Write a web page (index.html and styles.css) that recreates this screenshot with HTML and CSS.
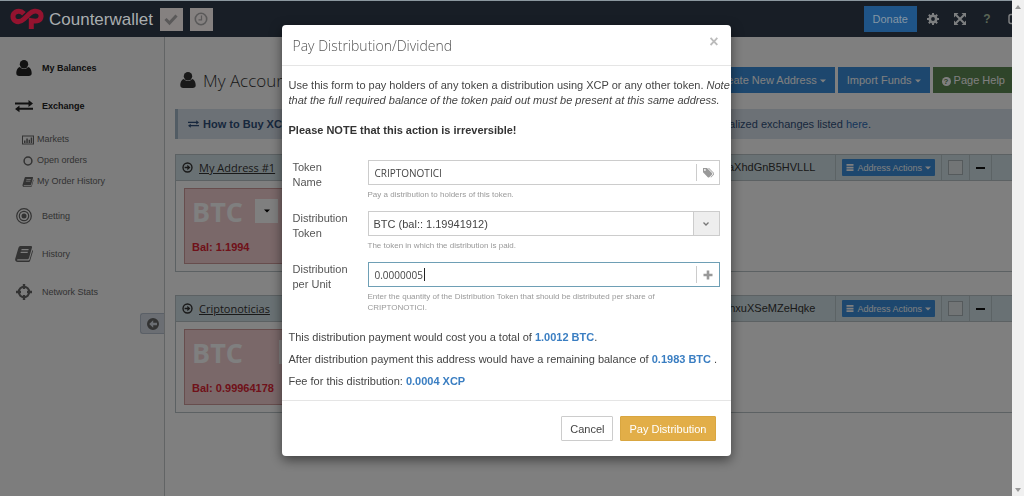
FILE: index.html
```
<!DOCTYPE html>
<html lang="en">
<head>
  <meta charset="UTF-8">
  <meta name="viewport" content="width=device-width, initial-scale=1.0">
  <title>Counterwallet</title>
  <link rel="stylesheet" href="styles.css">
</head>
<body>
  <!-- shared icons -->
  <svg class="sprite" aria-hidden="true">
    <symbol id="i-user" viewBox="0 0 16 16"><circle cx="8" cy="4.200" r="4.200"/><path d="M4 7C1.500 7.500 .3 10.500.3 13.200C.3 15 1.500 16 3.200 16H12.800C14.500 16 15.700 15 15.700 13.200C15.700 10.500 14.500 7.500 12 7C10 9.700 6 9.700 4 7Z"/></symbol>
    <symbol id="i-exchange" viewBox="0 0 20 14"><path d="M0 3H15V.3L20 4.200L15 8V5.200H0ZM20 9H5V6.400L0 10.200L5 14V11.200H20Z"/></symbol>
    <symbol id="i-chart" viewBox="0 0 12 10"><path d="M0 .5H12V9.500H0ZM1 1.500V8.500H11V1.500ZM2 5.500H3.500V8H2ZM4.300 3.500H5.800V8H4.300ZM6.600 4.700H8V8H6.600ZM8.700 2.500H10.200V8H8.700Z" fill-rule="evenodd"/></symbol>
    <symbol id="i-circle" viewBox="0 0 10 10"><circle cx="5" cy="5" r="3.900" fill="none" stroke="currentColor" stroke-width="1.500"/></symbol>
    <symbol id="i-book" viewBox="0 0 18 16"><path d="M5.500 0H15.800C16.800 0 17.200.8 17 1.600L14 12C13.700 13 13 13.300 12.200 13.300H2.800C1.800 13.300 1.800 14.600 3 14.600H13.400C14 14.600 14.400 14.300 14.600 13.600L17.400 4C18 4.400 18 5 17.800 5.700L15.200 14.400C14.900 15.500 14.200 16 13.200 16H2.800C.8 16-.3 14.300.3 12.500L3.400 2C3.800.7 4.400 0 5.500 0ZM6.600 3L6.300 4.200H13.400L13.700 3ZM5.800 5.800L5.500 7H12.600L12.900 5.800Z" fill-rule="evenodd"/></symbol>
    <symbol id="i-target" viewBox="0 0 16 16"><circle cx="8" cy="8" r="7.300" fill="none" stroke="currentColor" stroke-width="1.200"/><circle cx="8" cy="8" r="4.700" fill="none" stroke="currentColor" stroke-width="1.200"/><circle cx="8" cy="8" r="2.500"/></symbol>
    <symbol id="i-cross" viewBox="0 0 16 16"><circle cx="8" cy="8" r="5.200" fill="none" stroke="currentColor" stroke-width="2"/><path d="M6.800 0H9.200V5H6.800ZM6.800 11H9.200V16H6.800ZM0 6.800H5V9.200H0ZM11 6.800H16V9.200H11Z"/></symbol>
    <symbol id="i-right" viewBox="0 0 12 12"><circle cx="6" cy="6" r="4.900" fill="none" stroke="currentColor" stroke-width="1.500"/><path d="M2.800 5.200H5.800V3L9.200 6L5.800 9V6.800H2.800Z"/></symbol>
    <symbol id="i-bars" viewBox="0 0 8 8"><path d="M0 0H8V2H0ZM0 3H8V5H0ZM0 6H8V8H0Z"/></symbol>
    <symbol id="i-caret" viewBox="0 0 6 4"><path d="M0 .5H6L3 3.500Z"/></symbol>
  </svg>

  <header class="topbar">
    <a class="brand" href="#">
      <svg class="logo" viewBox="0 0 34 22"><path d="M14 5.800C11.500 3.200 8 2.800 5.200 4.300C2.300 6 2.300 10.800 5 12.600C8 14.500 11.500 13.300 14 11L19.500 5.800C22.500 3 26.500 2.300 29.300 4.300C32 6.500 31.500 10.800 28.700 12.400C26.500 13.600 24 13.200 21.300 12.600V21" fill="none" stroke="currentColor" stroke-width="5"/></svg>
      <span>Counterwallet</span>
    </a>
    <button class="square" aria-label="Status"><svg viewBox="0 0 14 14"><path d="M1.500 7L5.500 11L12.500 3.500" fill="none" stroke="currentColor" stroke-width="3"/></svg></button>
    <button class="square" aria-label="Pending"><svg viewBox="0 0 14 14"><circle cx="7" cy="7" r="5.700" fill="none" stroke="currentColor" stroke-width="1.600"/><path d="M7.500 3.500V7.800H4.500" fill="none" stroke="currentColor" stroke-width="1.200"/></svg></button>
    <nav class="tools">
      <button class="donate">Donate</button>
      <a href="#" aria-label="Settings"><svg viewBox="0 0 12 12"><circle cx="6" cy="6" r="3.200" fill="none" stroke="currentColor" stroke-width="2.600"/><path d="M6 0V2.500M6 9.500V12M0 6H2.500M9.500 6H12M1.800 1.800L3.500 3.500M8.500 8.500L10.200 10.200M10.200 1.800L8.500 3.500M3.500 8.500L1.800 10.200" stroke="currentColor" stroke-width="2"/></svg></a>
      <a href="#" aria-label="Full screen"><svg viewBox="0 0 12 12"><path d="M0 0H4.500L0 4.500ZM12 0V4.500L7.500 0ZM0 12V7.500L4.500 12ZM12 12H7.500L12 7.500Z"/><path d="M2 2L10 10M10 2L2 10" stroke="currentColor" stroke-width="2"/></svg></a>
      <a class="ask" href="#">?</a>
      <a href="#" aria-label="Log out"><svg viewBox="0 0 12 12"><path d="M6 1.500H3C1.800 1.500 1 2.300 1 3.500V8.500C1 9.700 1.800 10.500 3 10.500H6" fill="none" stroke="currentColor" stroke-width="1.500"/><path d="M4 4.500H7V2L11.500 6L7 10V7.500H4Z"/></svg></a>
    </nav>
  </header>

  <div class="page">
    <aside class="sidebar">
      <ul class="menu">
        <li class="on"><a href="#"><svg><use href="#i-user"/></svg>My Balances</a></li>
        <li class="on"><a href="#"><svg><use href="#i-exchange"/></svg>Exchange</a>
          <ul class="submenu">
            <li><a href="#"><svg><use href="#i-chart"/></svg>Markets</a></li>
            <li><a href="#"><svg><use href="#i-circle"/></svg>Open orders</a></li>
            <li><a href="#"><svg><use href="#i-book"/></svg>My Order History</a></li>
          </ul>
        </li>
        <li><a href="#"><svg><use href="#i-target"/></svg>Betting</a></li>
        <li><a href="#"><svg><use href="#i-book"/></svg>History</a></li>
        <li><a href="#"><svg><use href="#i-cross"/></svg>Network Stats</a></li>
      </ul>
      <button class="collapse" aria-label="Collapse menu"><svg viewBox="0 0 12 12"><path d="M6 0A6 6 0 1 1 6 12A6 6 0 1 1 6 0ZM6.200 2.200L2.200 6L6.200 9.800V7.200H10V4.800H6.200Z" fill-rule="evenodd"/></svg></button>
    </aside>

    <main class="content">
      <div class="heading">
        <svg><use href="#i-user"/></svg>
        <h1>My Account</h1>
        <button class="btn blue">Create New Address <svg><use href="#i-caret"/></svg></button>
        <button class="btn blue">Import Funds <svg><use href="#i-caret"/></svg></button>
        <button class="btn green"><b>?</b> Page Help</button>
      </div>

      <div class="notice">
        <svg><use href="#i-exchange"/></svg>
        <strong>How to Buy XCP</strong>
        <p>centralized exchanges listed <a href="#">here</a>.</p>
      </div>

      <section class="card">
        <header>
          <svg><use href="#i-right"/></svg>
          <a class="name" href="#">My Address #1</a>
          <span class="address">aXhdGnB5HVLLL</span>
          <div class="cell"><button class="actions"><svg class="bars"><use href="#i-bars"/></svg>Address Actions<svg class="caret"><use href="#i-caret"/></svg></button></div>
          <div class="cell"><button class="box" aria-label="Color"></button></div>
          <div class="cell"><button class="minus" aria-label="Minimize"></button></div>
          <div class="cell last"></div>
        </header>
        <div class="tile">
          <div class="coin">BTC <button aria-label="BTC actions"><svg><use href="#i-caret"/></svg></button></div>
          <div class="bal">Bal: 1.1994</div>
        </div>
      </section>

      <section class="card">
        <header>
          <svg><use href="#i-right"/></svg>
          <a class="name" href="#">Criptonoticias</a>
          <span class="address">hxuXSeMZeHqke</span>
          <div class="cell"><button class="actions"><svg class="bars"><use href="#i-bars"/></svg>Address Actions<svg class="caret"><use href="#i-caret"/></svg></button></div>
          <div class="cell"><button class="box" aria-label="Color"></button></div>
          <div class="cell"><button class="minus" aria-label="Minimize"></button></div>
          <div class="cell last"></div>
        </header>
        <div class="tile wide">
          <div class="coin">BTC <button aria-label="BTC actions"><svg><use href="#i-caret"/></svg></button></div>
          <div class="bal">Bal: 0.99964178</div>
        </div>
      </section>
    </main>
  </div>

  <div class="backdrop"></div>

  <div class="modal-wrap">
    <form class="modal" role="dialog" aria-labelledby="modalTitle">
      <div class="modal-header">
        <h2 id="modalTitle">Pay Distribution/Dividend</h2>
        <button type="button" class="close" aria-label="Close">×</button>
      </div>
      <div class="modal-body">
        <p class="intro">Use this form to pay holders of any token a distribution using XCP or any other token. <em>Note that the full required balance of the token paid out must be present at this same address.</em></p>
        <p class="warn">Please NOTE that this action is irreversible!</p>

        <div class="row">
          <label for="tokenName">Token Name</label>
          <div class="control">
            <div class="field"><input type="text" id="tokenName" value="CRIPTONOTICI"><span class="addon"><svg viewBox="0 0 12 12"><path d="M1 1H5L10 6C10.500 6.500 10.500 7 10 7.500L7.300 10.200C6.800 10.700 6.300 10.700 5.800 10.200L1 5.300ZM2.900 2A.9.9 0 1 0 2.900 3.800A.9.9 0 1 0 2.900 2ZM6 1H7L12 6C12.500 6.500 12.400 7 12 7.500L9 10.500L8.500 10L11 7.400C11.500 7 11.500 6.500 11 6Z" fill-rule="evenodd"/></svg></span></div>
            <p>Pay a distribution to holders of this token.</p>
          </div>
        </div>
        <div class="row">
          <label for="distToken">Distribution Token</label>
          <div class="control">
            <div class="field"><select id="distToken"><option>BTC (bal:: 1.19941912)</option></select><span class="arrow"><svg viewBox="0 0 6 4"><path d="M.5.5L3 3L5.500.5" fill="none" stroke="currentColor" stroke-width="1.300"/></svg></span></div>
            <p>The token in which the distribution is paid.</p>
          </div>
        </div>
        <div class="row">
          <label for="perUnit">Distribution per Unit</label>
          <div class="control">
            <div class="field focus"><input type="text" id="perUnit" value="0.0000005"><i class="cursor"></i><span class="addon"><svg viewBox="0 0 12 12"><path d="M4.700 1.500H7.300V4.700H10.500V7.300H7.300V10.500H4.700V7.300H1.500V4.700H4.700Z"/></svg></span></div>
            <p>Enter the quantity of the Distribution Token that should be distributed per share of CRIPTONOTICI.</p>
          </div>
        </div>

        <div class="totals">
          <p>This distribution payment would cost you a total of <b>1.0012 BTC</b>.</p>
          <p>After distribution payment this address would have a remaining balance of <b>0.1983 BTC</b> .</p>
          <p>Fee for this distribution: <b>0.0004 XCP</b></p>
        </div>
      </div>
      <div class="modal-footer">
        <button type="button" class="cancel">Cancel</button>
        <button type="submit" class="pay">Pay Distribution</button>
      </div>
    </form>
  </div>

  <div class="scrollbar">
    <svg viewBox="0 0 6 4"><path d="M0 4L3 0L6 4Z"/></svg>
    <svg viewBox="0 0 6 4"><path d="M0 0L3 4L6 0Z"/></svg>
  </div>
</body>
</html>
```
FILE: styles.css
```
* {
  box-sizing: border-box;
}

body {
  margin: 0;
  height: 100vh;
  display: flex;
  flex-direction: column;
  overflow: hidden;
  font-family: "Liberation Sans", Arial, sans-serif;
  font-size: 11px;
  line-height: 15px;
  color: #333;
  background: #fff;
}

h1, h2, p, ul {
  margin: 0;
  padding: 0;
  font-weight: normal;
}

ul {
  list-style: none;
}

a {
  color: inherit;
  text-decoration: none;
}

button, input, select {
  font-family: inherit;
  font-size: 11px;
  color: inherit;
  margin: 0;
  padding: 0;
  border: none;
  background: none;
}

svg {
  fill: currentColor;
  flex: none;
}

.sprite {
  position: absolute;
  width: 0;
  height: 0;
}

/* top bar */
.topbar {
  position: relative;
  z-index: 20;
  display: flex;
  align-items: center;
  flex: none;
  height: 37px;
  padding: 0 4px 0 10px;
  border-top: 1px solid #8c989f;
  background: #181e26;
  color: #7d7f80;
}

.brand {
  display: flex;
  align-items: center;
  gap: 5px;
  margin-right: 7px;
  font-size: 17px;
  color: #a9adaf;
}

.logo {
  width: 34px;
  height: 22px;
  color: #94132f;
}

.square {
  display: flex;
  align-items: center;
  justify-content: center;
  width: 23px;
  height: 23px;
  margin-right: 7px;
  background: #858180;
  color: #5a5959;
}

.square svg {
  width: 14px;
  height: 14px;
}

.tools {
  display: flex;
  align-items: center;
  gap: 15px;
  margin-left: auto;
}

.tools svg {
  display: block;
  width: 12px;
  height: 12px;
}

.donate {
  height: 26px;
  padding: 0 9px;
  margin-right: -5px;
  background: #1f5487;
  color: #8496a4;
}

.ask {
  width: 12px;
  text-align: center;
  font-size: 12px;
  font-weight: bold;
  color: #5a6656;
}

/* sidebar */
.page {
  display: flex;
  flex: 1;
}

.sidebar {
  position: relative;
  flex: none;
  width: 165px;
  padding-top: 12px;
  border-right: 1px solid #c4c8ca;
  background: #fafafa;
}

.menu {
  font-size: 9px;
  color: #666;
}

.menu a {
  display: flex;
  align-items: center;
  height: 38px;
  padding-left: 15px;
  gap: 9px;
}

.menu svg {
  width: 18px;
  height: 16px;
}

.menu .on > a {
  font-weight: bold;
  color: #222;
}

.menu .submenu {
  padding: 4px 0 5px;
}

.menu .submenu a {
  height: 21px;
  padding-left: 22px;
  gap: 3px;
}

.menu .submenu svg {
  width: 12px;
  height: 10px;
}

.collapse {
  position: absolute;
  right: 0;
  top: 276px;
  width: 24px;
  height: 21px;
  border: 1px solid #b6c0ce;
  border-right: none;
  border-radius: 3px 0 0 3px;
  background: #d7dde6;
  color: #666;
}

.collapse svg {
  display: block;
  width: 12px;
  height: 12px;
  margin: auto;
}

/* content */
.content {
  flex: 1;
  padding: 30px 0 0 10px;
  min-width: 0;
}

.heading {
  display: flex;
  align-items: center;
  gap: 3px;
  height: 26px;
  padding: 0 10px 0 5px;
  white-space: nowrap;
}

.heading > svg {
  width: 16px;
  height: 16px;
}

h1 {
  flex: 1;
  margin-left: 4px;
  font-family: "Open Sans", sans-serif;
  font-size: 17px;
  font-weight: 300;
}

.btn {
  height: 26px;
  padding: 0 9px;
  color: #fff;
}

.btn svg {
  width: 6px;
  height: 4px;
  vertical-align: middle;
}

.blue {
  background: #3a8fdd;
}

.green {
  background: #5f8a55;
}

.btn b {
  display: inline-block;
  width: 9px;
  height: 9px;
  border-radius: 50%;
  background: #fff;
  color: #5f8a55;
  font-size: 8px;
  line-height: 9px;
  vertical-align: middle;
}

.notice {
  display: flex;
  align-items: center;
  height: 30px;
  margin: 16px 0 15px;
  padding: 0 153px 0 10px;
  gap: 4px;
  border-left: 3px solid #a5b8c8;
  background: #d9e2ec;
  color: #2f4f7a;
}

.notice svg {
  width: 11px;
  height: 8px;
}

.notice p {
  margin-left: auto;
}

.notice a {
  color: #2a6bb5;
}

.card {
  height: 118px;
  margin-bottom: 23px;
  border: 1px solid #b8c2c6;
  border-right: none;
}

.card header {
  display: flex;
  align-items: center;
  height: 26px;
  padding-left: 6px;
  background: #d3e3e8;
  border-bottom: 1px solid #b8c2c6;
}

.card header > svg {
  width: 11px;
  height: 11px;
}

.name {
  margin-left: 6px;
  font-family: "Open Sans", sans-serif;
  text-decoration: underline;
}

.address {
  margin-left: auto;
  margin-right: 20px;
}

.cell {
  display: flex;
  align-items: center;
  height: 25px;
  padding: 0 6px;
  border-left: 1px solid #b8c6cb;
}

.last {
  width: 33px;
}

.actions {
  display: flex;
  align-items: center;
  height: 17px;
  padding: 0 4px;
  gap: 3px;
  border-radius: 1px;
  background: #3a8fdd;
  color: #fff;
  font-size: 9px;
}

.bars {
  width: 8px;
  height: 7px;
}

.caret {
  width: 6px;
  height: 4px;
}

.box {
  width: 15px;
  height: 15px;
  border: 1px solid #aab4b8;
  background: #e4ebed;
}

.minus {
  width: 9px;
  height: 2px;
  background: #111;
}

.tile {
  width: 140px;
  height: 76px;
  margin: 7px 0 0 8px;
  padding: 10px 7px 0;
  border: 1px solid #cf9a9a;
  background: #f4d0d2;
}

.wide {
  width: 180px;
}

.coin {
  display: flex;
  align-items: center;
  justify-content: space-between;
  width: 86px;
  height: 24px;
  font-family: "Open Sans", sans-serif;
  font-size: 27px;
  font-weight: bold;
  color: #fff;
}

.wide .coin {
  width: 110px;
}

.coin button {
  display: flex;
  align-items: center;
  justify-content: center;
  width: 23px;
  height: 24px;
  background: #fff;
  color: #000;
}

.coin svg {
  width: 6px;
  height: 4px;
}

.bal {
  margin-top: 17px;
  font-weight: bold;
  color: #e02434;
}

/* modal */
.backdrop {
  position: fixed;
  top: 37px;
  right: 0;
  bottom: 0;
  left: 0;
  z-index: 10;
  background: rgba(0, 0, 0, 0.5);
}

.modal-wrap {
  position: fixed;
  top: 0;
  right: 12px;
  left: 0;
  z-index: 30;
}

.modal {
  width: 449px;
  margin: 25px auto;
  border-radius: 4px;
  background: #fff;
  box-shadow: 0 4px 12px rgba(0, 0, 0, 0.5);
  color: #444;
}

.modal-header {
  display: flex;
  align-items: center;
  justify-content: space-between;
  height: 41px;
  padding: 0 12px 0 11px;
  border-bottom: 1px solid #e5e5e5;
}

h2 {
  font-family: "Open Sans", sans-serif;
  font-size: 14px;
  font-weight: 300;
  color: #555;
}

.close {
  margin-bottom: 6px;
  font-size: 16px;
  font-weight: bold;
  color: #bbb;
}

.modal-body {
  padding: 12px 0 4px 7px;
}

.warn {
  margin: 15px 0 22px;
  font-weight: bold;
  color: #333;
}

.row {
  display: flex;
  padding: 0 11px 0 4px;
  margin-bottom: 11px;
}

.row label {
  width: 75px;
  padding-right: 17px;
  color: #555;
}

.control {
  flex: 1;
}

.control p {
  margin-top: 4px;
  padding-right: 40px;
  font-size: 8px;
  line-height: 11px;
  color: #999;
}

.field {
  display: flex;
  align-items: center;
  height: 25px;
  border: 1px solid #ccc;
}

.focus {
  border-color: #6e9fb5;
}

.field input {
  flex: 1;
  height: 23px;
  padding-left: 6px;
  font-family: "Open Sans", sans-serif;
  font-size: 10px;
  outline: none;
}

.focus input {
  flex: none;
  width: 55px;
}

.cursor {
  width: 1px;
  height: 13px;
  margin-right: auto;
  background: #222;
}

.field select {
  flex: 1;
  height: 23px;
  padding-left: 5px;
  appearance: none;
  outline: none;
}

.addon {
  display: flex;
  align-items: center;
  height: 17px;
  padding: 0 5px;
  border-left: 1px solid #ccc;
  color: #999;
}

.addon svg {
  width: 12px;
  height: 12px;
}

.arrow {
  display: flex;
  align-items: center;
  justify-content: center;
  width: 26px;
  height: 23px;
  border-left: 1px solid #ccc;
  background: #eee;
  color: #777;
}

.arrow svg {
  width: 6px;
  height: 4px;
}

.totals {
  margin-top: 17px;
}

.totals p {
  margin-bottom: 7px;
}

.totals b {
  color: #3a7ec2;
}

.modal-footer {
  display: flex;
  justify-content: flex-end;
  gap: 7px;
  padding: 15px;
  border-top: 1px solid #e5e5e5;
}

.modal-footer button {
  height: 25px;
  padding: 0 8px;
  border: 1px solid #ccc;
  border-radius: 1px;
}

.modal-footer .pay {
  border-color: #d9a640;
  background: #e2ae48;
  color: #fff;
}

.scrollbar {
  position: fixed;
  top: 0;
  right: 0;
  bottom: 0;
  z-index: 40;
  display: flex;
  flex-direction: column;
  align-items: center;
  justify-content: space-between;
  width: 12px;
  padding: 5px 0 4px;
  background: #f0f0f0;
  color: #999;
}

.scrollbar svg {
  width: 6px;
  height: 4px;
}
```
